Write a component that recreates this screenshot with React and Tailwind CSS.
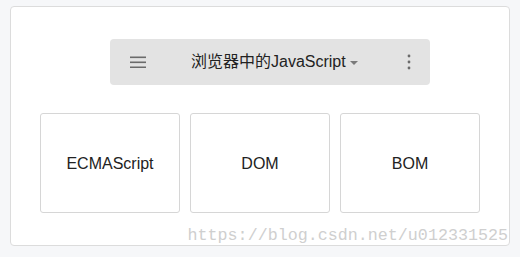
import React from 'react';

const Hamburger = () => (
  <svg width="16" height="12" viewBox="0 0 16 12" className="block">
    <rect x="0" y="0.5" width="16" height="1.6" fill="#6b6b6b" />
    <rect x="0" y="5.5" width="16" height="1.6" fill="#6b6b6b" />
    <rect x="0" y="10.5" width="16" height="1.6" fill="#6b6b6b" />
  </svg>
);

const MoreDots = () => (
  <svg width="4" height="16" viewBox="0 0 4 16" className="block">
    <circle cx="2" cy="2" r="1.4" fill="#6b6b6b" />
    <circle cx="2" cy="8" r="1.4" fill="#6b6b6b" />
    <circle cx="2" cy="14" r="1.4" fill="#6b6b6b" />
  </svg>
);

const Box = ({ label }) => (
  <div className="w-[140px] h-[100px] border border-[#d6d6d6] rounded-[3px] bg-white flex items-center justify-center pt-[2px] text-[16px] text-[#222]">
    {label}
  </div>
);

export default function App() {
  return (
    <div
      className="relative w-[520px] h-[257px] bg-[#f6f7f9] pt-[6px] pl-[10px] overflow-hidden"
      style={{ fontFamily: '"Liberation Sans", "Noto Sans CJK SC", sans-serif' }}
    >
      {/* Card */}
      <div className="w-[500px] h-[240px] bg-white border border-[#dcdcdc] rounded-[4px] pt-[32px]">
        {/* Toolbar */}
        <div className="ml-[99px] w-[320px] h-[46px] bg-[#e3e3e3] rounded-[4px] flex items-center pl-[20px] pr-[20px]">
          <Hamburger />
          <span className="ml-[45px] text-[16px] text-[#222] leading-none">浏览器中的JavaScript</span>
          <svg width="8" height="4" viewBox="0 0 8 4" className="ml-[4px] mt-[1px] block">
            <polygon points="0,0 8,0 4,4" fill="#7a7a7a" />
          </svg>
          <div className="ml-auto -mr-[1px]">
            <MoreDots />
          </div>
        </div>

        {/* Boxes */}
        <div className="mt-[28px] ml-[29px] flex gap-[10px]">
          <Box label="ECMAScript" />
          <Box label="DOM" />
          <Box label="BOM" />
        </div>
      </div>

      {/* Watermark */}
      <div
        className="absolute right-[12px] top-[228px] text-[16.7px] leading-none text-[#cfcfcf] whitespace-nowrap"
        style={{ fontFamily: '"Liberation Mono", monospace' }}
      >
        https://blog.csdn.net/u012331525
      </div>
    </div>
  );
}
